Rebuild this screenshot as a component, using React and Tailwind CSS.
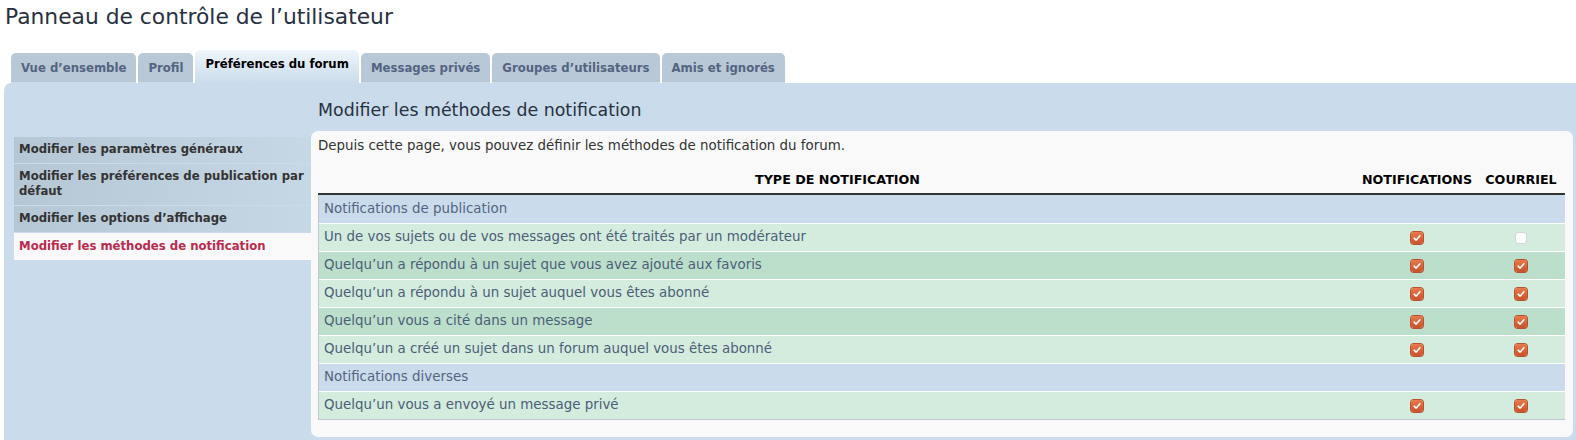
import React from 'react';

const tabs = [
    { label: 'Vue d’ensemble' },
    { label: 'Profil' },
    { label: 'Préférences du forum', active: true },
    { label: 'Messages privés' },
    { label: 'Groupes d’utilisateurs' },
    { label: 'Amis et ignorés' },
];

const menu = [
    { label: 'Modifier les paramètres généraux' },
    { label: 'Modifier les préférences de publication par défaut' },
    { label: 'Modifier les options d’affichage' },
    { label: 'Modifier les méthodes de notification', active: true },
];

const rows = [
    { section: 'Notifications de publication' },
    { label: 'Un de vos sujets ou de vos messages ont été traités par un modérateur', notif: true, mail: false },
    { label: 'Quelqu’un a répondu à un sujet que vous avez ajouté aux favoris', notif: true, mail: true, alt: true },
    { label: 'Quelqu’un a répondu à un sujet auquel vous êtes abonné', notif: true, mail: true },
    { label: 'Quelqu’un vous a cité dans un message', notif: true, mail: true, alt: true },
    { label: 'Quelqu’un a créé un sujet dans un forum auquel vous êtes abonné', notif: true, mail: true },
    { section: 'Notifications diverses' },
    { label: 'Quelqu’un vous a envoyé un message privé', notif: true, mail: true },
];

function Box({ checked }) {
    if (!checked) {
        return <span className="block w-[12px] h-[12px] rounded-[3px] bg-white border border-[#cfd6dc]" />;
    }
    return (
        <span className="flex items-center justify-center w-[12px] h-[12px] rounded-[3px] bg-gradient-to-b from-[#e8794b] to-[#c8532c] shadow-[0_0_0_1px_#b9532f]">
            <svg viewBox="0 0 12 12" className="w-[10px] h-[10px]">
                <path d="M2.5 6.2 L5 8.5 L9.5 3.3" fill="none" stroke="#fff" strokeWidth="1.8" strokeLinecap="round" strokeLinejoin="round" />
            </svg>
        </span>
    );
}

export default function App() {
    return (
        <div className="w-[1576px] h-[440px] overflow-hidden bg-white font-['DejaVu_Sans',sans-serif] text-[#28313f]">
            <h2 className="pl-[5px] pt-[3px] text-[21.8px] leading-[28px] text-[#28313f]">Panneau de contrôle de l’utilisateur</h2>

            <div className="flex items-end gap-[2px] pl-[11px] mt-[19px] h-[33px] font-['DejaVu_Sans_Condensed','DejaVu_Sans',sans-serif] text-[13px] font-bold">
                {tabs.map((t) =>
                    t.active ? (
                        <div key={t.label} className="h-[33px] px-[10px] pb-[5px] flex items-center rounded-t-[5px] bg-gradient-to-b from-[#eef5fb] to-[#cadceb] text-[#000]">
                            {t.label}
                        </div>
                    ) : (
                        <div key={t.label} className="h-[30px] px-[10px] flex items-center rounded-t-[5px] bg-[#b8c8d6] text-[#536482] border-b border-[#cadceb]">
                            {t.label}
                        </div>
                    )
                )}
            </div>

            <div className="ml-[4px] h-[360px] rounded-tl-[7px] bg-[#cadceb] flex">
                <div className="w-[307px] pl-[10px] pt-[54px] shrink-0">
                    <ul className="text-[11.7px] font-bold leading-[15px]">
                        {menu.map((m, i) =>
                            m.active ? (
                                <li key={i} className="pl-[5px] pr-[2px] pt-[6px] pb-[6px] bg-[#f9f9f9] text-[#bc2a4d]">{m.label}</li>
                            ) : (
                                <li key={i} className="pl-[5px] pr-[2px] pt-[5px] pb-[6px] bg-gradient-to-r from-[#b5c6d4] to-[#c6d7e5] text-[#333] border-b border-[#cadceb]">{m.label}</li>
                            )
                        )}
                    </ul>
                </div>

                <div className="flex-1 pr-[3px]">
                    <h3 className="pl-[7px] pt-[16px] h-[48px] text-[17.4px] leading-[22px] text-[#28313f]">Modifier les méthodes de notification</h3>
                    <div className="rounded-[7px] bg-[#f9f9f9] pl-[7px] pr-[8px] pt-[7px] pb-[17px]">
                        <p className="text-[13.4px] leading-[16px] text-[#333]">Depuis cette page, vous pouvez définir les méthodes de notification du forum.</p>
                        <div className="mt-[13px] grid grid-cols-[1fr_120px_88px] text-[12.7px] font-bold uppercase text-[#000] h-[28px] items-center border-b-2 border-[#333]">
                            <div className="text-center">Type de notification</div>
                            <div className="text-center">Notifications</div>
                            <div className="text-center">Courriel</div>
                        </div>
                        <div className="border-l border-b border-[#c0c8cf] text-[13.4px] text-[#4c5d77]">
                            {rows.map((r, i) =>
                                r.section ? (
                                    <div key={i} className={`h-[28px] flex items-center px-[5px] bg-[#cadceb] text-[#536482] ${i > 0 ? 'border-t border-white' : ''}`}>
                                        {r.section}
                                    </div>
                                ) : (
                                    <div key={i} className={`h-[28px] grid grid-cols-[1fr_120px_88px] items-center border-t border-white ${r.alt ? 'bg-[#bcdfcc]' : 'bg-[#d3ecde]'}`}>
                                        <div className="px-[5px]">{r.label}</div>
                                        <div className="flex justify-center"><Box checked={r.notif} /></div>
                                        <div className="flex justify-center"><Box checked={r.mail} /></div>
                                    </div>
                                )
                            )}
                        </div>
                    </div>
                </div>
            </div>
        </div>
    );
}
